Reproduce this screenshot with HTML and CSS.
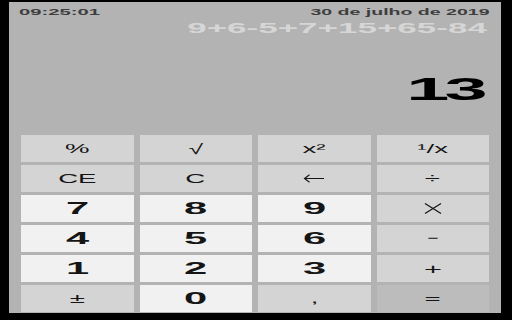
FILE: index.html
```html
<!DOCTYPE html>
<html lang="pt">
<head>
<meta charset="utf-8">
<title>Calculadora</title>
<link rel="stylesheet" href="styles.css">
</head>
<body>
<div class="panel">
  <div class="top">
    <span class="sx sx-left time">09:25:01</span>
    <span class="sx sx-right date">30 de julho de 2019</span>
  </div>
  <div class="expr"><span class="sx sx-right">9+6-5+7+15+65-84</span></div>
  <div class="spacer"></div>
  <div class="result"><span class="sx sx-right">13</span></div>
  <div class="keys">
    <div class="key fn"><span class="lbl">%</span></div>
    <div class="key fn"><span class="lbl root">√</span></div>
    <div class="key fn"><span class="lbl">x²</span></div>
    <div class="key fn"><span class="lbl">¹/x</span></div>

    <div class="key fn"><span class="lbl">CE</span></div>
    <div class="key fn"><span class="lbl">C</span></div>
    <div class="key fn" aria-label="←">
      <svg class="icon" width="22" height="9" viewBox="0 0 22 9"><path d="M21 4.5H1.5M6.5 0.8L1.5 4.5L6.5 8.2" fill="none" stroke="#151515" stroke-width="1.1"/></svg>
    </div>
    <div class="key fn"><span class="lbl">÷</span></div>

    <div class="key num"><span class="lbl">7</span></div>
    <div class="key num"><span class="lbl">8</span></div>
    <div class="key num"><span class="lbl">9</span></div>
    <div class="key fn" aria-label="×">
      <svg class="icon" width="18" height="11" viewBox="0 0 18 11"><path d="M1 0.5L17 10.5M17 0.5L1 10.5" fill="none" stroke="#151515" stroke-width="1.2"/></svg>
    </div>

    <div class="key num"><span class="lbl">4</span></div>
    <div class="key num"><span class="lbl">5</span></div>
    <div class="key num"><span class="lbl">6</span></div>
    <div class="key fn"><span class="lbl minus">−</span></div>

    <div class="key num"><span class="lbl">1</span></div>
    <div class="key num"><span class="lbl">2</span></div>
    <div class="key num"><span class="lbl">3</span></div>
    <div class="key fn"><span class="lbl plus">+</span></div>

    <div class="key fn"><span class="lbl">±</span></div>
    <div class="key num"><span class="lbl">0</span></div>
    <div class="key fn"><span class="lbl">,</span></div>
    <div class="key eq"><span class="lbl">=</span></div>
  </div>
</div>
</body>
</html>
```
FILE: styles.css
```css
html, body {
  margin: 0;
  padding: 0;
  background: #000;
}
body {
  width: 512px;
  height: 320px;
  overflow: hidden;
}
.panel {
  margin: 2px 0 0 9px;
  width: 492px;
  height: 311px;
  background: #b3b3b3;
  display: flex;
  flex-direction: column;
  font-family: "Liberation Sans", Arial, sans-serif;
}
.sx {
  display: inline-block;
  white-space: nowrap;
}
.sx-left { transform-origin: left center; }
.sx-right { transform-origin: right center; }

.top {
  height: 20px;
  line-height: 20px;
  display: flex;
  justify-content: space-between;
  padding: 0 11px 0 10px;
  font-size: 9px;
  font-weight: bold;
  color: #3e3e3e;
}
.time { transform: scaleX(2.25); }
.date { transform: scaleX(2.17); }

.expr {
  height: 13px;
  line-height: 13px;
  text-align: right;
  padding-right: 14px;
  font-size: 14px;
  font-weight: bold;
  color: #d6d6d6;
}
.expr .sx { transform: scaleX(2.5); }

.spacer { flex: 1; }

.result {
  height: 36px;
  line-height: 35px;
  text-align: right;
  padding-right: 19px;
  margin-bottom: 27px;
  font-size: 31px;
  font-weight: bold;
  color: #000;
}
.result .sx {
  transform: scaleX(2.5);
  letter-spacing: -2px;
}

.keys {
  display: grid;
  grid-template-columns: repeat(4, 1fr);
  grid-template-rows: repeat(6, 27px);
  gap: 3px 6px;
  padding: 0 12px 1px;
}
.key {
  display: flex;
  align-items: center;
  justify-content: center;
  color: #151515;
}
.lbl {
  display: inline-block;
  white-space: nowrap;
}
.fn { background: #d4d4d4; }
.num { background: #f1f1f1; }
.eq { background: #bcbcbc; }

.fn .lbl, .eq .lbl {
  font-size: 12px;
  transform: scaleX(2.3);
}
.fn .root {
  font-size: 14px;
  transform: scaleX(1.9);
}
.fn .plus {
  font-size: 14px;
  transform: scaleX(2.2);
}
.fn .minus {
  font-size: 12px;
  transform: translateY(-1px) scaleX(1.6);
}
.num .lbl {
  font-size: 16px;
  font-weight: bold;
  transform: scaleX(2.6);
}
.icon { display: block; }
```
